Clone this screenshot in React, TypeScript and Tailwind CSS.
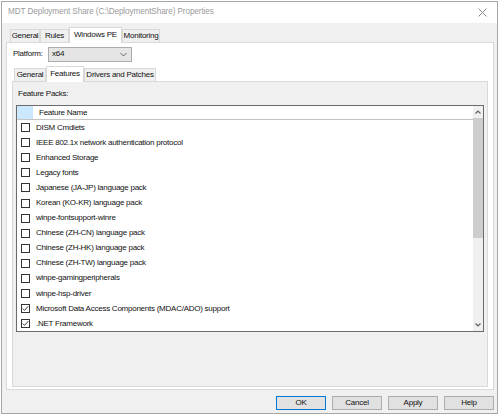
import React from "react";

type Feature = { name: string; checked: boolean };

const features: Feature[] = [
  { name: "DISM Cmdlets", checked: false },
  { name: "IEEE 802.1x network authentication protocol", checked: false },
  { name: "Enhanced Storage", checked: false },
  { name: "Legacy fonts", checked: false },
  { name: "Japanese (JA-JP) language pack", checked: false },
  { name: "Korean (KO-KR) language pack", checked: false },
  { name: "winpe-fontsupport-winre", checked: false },
  { name: "Chinese (ZH-CN) language pack", checked: false },
  { name: "Chinese (ZH-HK) language pack", checked: false },
  { name: "Chinese (ZH-TW) language pack", checked: false },
  { name: "winpe-gamingperipherals", checked: false },
  { name: "winpe-hsp-driver", checked: false },
  { name: "Microsoft Data Access Components (MDAC/ADO) support", checked: true },
  { name: ".NET Framework", checked: true },
];

function CheckBox({ checked }: { checked: boolean }) {
  return (
    <div className="w-[9px] h-[9px] border border-[#333333] bg-white flex items-center justify-center shrink-0">
      {checked && (
        <svg width="7" height="7" viewBox="0 0 7 7">
          <polyline points="0.8,3.6 2.6,5.4 6.2,1.2" fill="none" stroke="#3c3c3c" strokeWidth="1" />
        </svg>
      )}
    </div>
  );
}

function OuterTab({ label, width, selected }: { label: string; width: number; selected?: boolean }) {
  if (selected) {
    return (
      <div
        className="h-[16px] bg-white border border-b-0 border-[#d9d9d9] flex items-center justify-center relative z-10 mb-[-1px] whitespace-nowrap"
        style={{ width }}
      >
        <span className="mt-[-1px]">{label}</span>
      </div>
    );
  }
  return (
    <div
      className="h-[13px] bg-[#f0f0f0] border border-b-0 border-[#d9d9d9] flex items-center justify-center whitespace-nowrap"
      style={{ width }}
    >
      {label}
    </div>
  );
}

function Button({ label, primary }: { label: string; primary?: boolean }) {
  return (
    <div
      className={
        primary
          ? "w-[50px] h-[14px] border border-[#0078d7] bg-[#e1e1e1] flex items-center justify-center"
          : "w-[50px] h-[14px] border border-[#adadad] bg-[#e1e1e1] flex items-center justify-center"
      }
    >
      {label}
    </div>
  );
}

export default function App() {
  return (
    <div
      className="w-[500px] h-[416px] bg-white overflow-hidden text-[8px] leading-none text-[#111111] tracking-[-0.25px]"
      style={{ fontFamily: '"Liberation Sans", Arial, sans-serif' }}
    >
      <div className="ml-[1px] mt-[1px] w-[497px] h-[413px] border border-[#a6a6a6] flex flex-col bg-[#f0f0f0]">
        {/* title bar */}
        <div className="h-[21px] bg-white flex items-center pl-[6px] pr-[10px] shrink-0">
          <span className="text-[8.2px] tracking-[-0.1px] text-[#9b9b9b]">
            MDT Deployment Share (C:\DeploymentShare) Properties
          </span>
          <svg className="ml-auto" width="9" height="9" viewBox="0 0 9 9">
            <path d="M0.5 0.5 L8.5 8.5 M8.5 0.5 L0.5 8.5" stroke="#8a8a8a" strokeWidth="1" />
          </svg>
        </div>

        <div className="flex-1 flex flex-col pl-[4px]">
          {/* outer tabs */}
          <div className="flex items-end h-[19px] pl-[4px] shrink-0">
            <OuterTab label="General" width={30} />
            <OuterTab label="Rules" width={29} />
            <OuterTab label="Windows PE" width={53} selected />
            <OuterTab label="Monitoring" width={38} />
          </div>

          {/* Windows PE page */}
          <div className="w-[488px] h-[348px] bg-white border border-[#d9d9d9] flex flex-col px-[5px] pb-[2px]">
            <div className="flex items-center h-[14px] mt-[4px] pl-[1px]">
              <span className="w-[35px]">Platform:</span>
              <div className="w-[84px] h-[15px] bg-[#e5e5e5] border border-[#acacac] flex items-center pl-[3px] pr-[4px]">
                <span>x64</span>
                <svg className="ml-auto" width="7" height="5" viewBox="0 0 7 5">
                  <polyline points="0.5,1 3.5,4 6.5,1" fill="none" stroke="#555" strokeWidth="0.9" />
                </svg>
              </div>
            </div>

            {/* inner tabs */}
            <div className="flex items-end h-[16px] mt-[4px] pl-[2px]">
              <div className="w-[32px] h-[13px] bg-[#f0f0f0] border border-b-0 border-[#d9d9d9] flex items-center justify-center whitespace-nowrap">
                General
              </div>
              <div className="w-[38px] h-[16px] bg-white border border-b-0 border-[#d9d9d9] flex items-center justify-center relative z-10 mb-[-1px] whitespace-nowrap">
                <span className="mt-[-1px]">Features</span>
              </div>
              <div className="w-[72px] h-[13px] bg-[#f0f0f0] border border-b-0 border-[#d9d9d9] flex items-center justify-center whitespace-nowrap">
                Drivers and Patches
              </div>
            </div>

            {/* Features page */}
            <div className="flex-1 bg-[#f0f0f0] border border-[#d9d9d9] flex flex-col pl-[3px] pr-[3px]">
              <div className="h-[23px] flex items-center pl-[2px]">Feature Packs:</div>
              <div className="h-[227px] w-[468px] bg-white border border-[#6b6b6b] flex">
                <div className="flex-1 flex flex-col overflow-hidden">
                  <div className="h-[14px] flex items-center border-b border-[#c4c4c4] shrink-0">
                    <div className="w-[16px] h-full bg-[#cce8ff]" />
                    <span className="pl-[6px]">Feature Name</span>
                  </div>
                  {features.map((f) => (
                    <div key={f.name} className="h-[15.1px] shrink-0 flex items-center pl-[4px]">
                      <CheckBox checked={f.checked} />
                      <span className="pl-[6px] whitespace-nowrap">{f.name}</span>
                    </div>
                  ))}
                </div>
                {/* vertical scroll bar */}
                <div className="w-[10px] bg-[#f0f0f0] flex flex-col">
                  <div className="h-[12px] flex items-center justify-center">
                    <svg width="6" height="4" viewBox="0 0 6 4">
                      <polyline points="0.5,3.5 3,1 5.5,3.5" fill="none" stroke="#606060" strokeWidth="1.1" />
                    </svg>
                  </div>
                  <div className="h-[120px] bg-[#cdcdcd]" />
                  <div className="flex-1" />
                  <div className="h-[12px] flex items-center justify-center">
                    <svg width="6" height="4" viewBox="0 0 6 4">
                      <polyline points="0.5,0.5 3,3 5.5,0.5" fill="none" stroke="#606060" strokeWidth="1.1" />
                    </svg>
                  </div>
                </div>
              </div>
            </div>
          </div>

          {/* dialog buttons */}
          <div className="flex justify-end gap-[6px] w-[488px] mt-[6px]">
            <Button label="OK" primary />
            <Button label="Cancel" />
            <Button label="Apply" />
            <Button label="Help" />
          </div>
        </div>
      </div>
    </div>
  );
}
